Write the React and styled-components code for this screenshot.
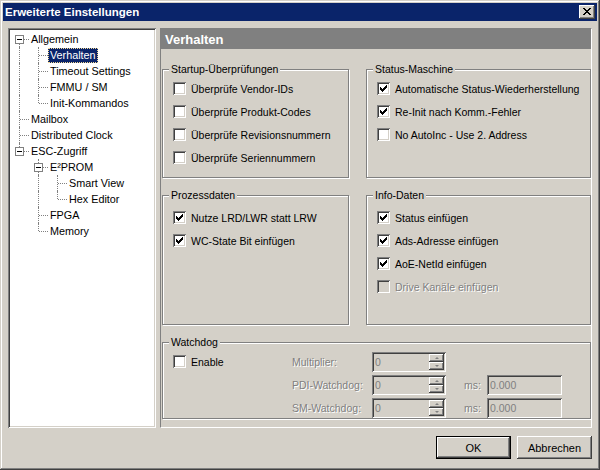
import React from "react";
import styled, { createGlobalStyle } from "styled-components";

// ----- Global -----
const GlobalStyle = createGlobalStyle`
  html, body {
    margin: 0;
    padding: 0;
    background: #d4d0c8;
  }
  body {
    font-family: "Liberation Sans", Arial, sans-serif;
    font-size: 11px;
    color: #000;
  }
  * { box-sizing: border-box; }
`;

// ----- Window frame -----
const Window = styled.div`
  width: 600px;
  height: 470px;
  padding: 3px;
  display: flex;
  flex-direction: column;
  background: #d4d0c8;
  box-shadow: inset -1px -1px 0 #404040, inset 1px 1px 0 #d4d0c8,
    inset -2px -2px 0 #808080, inset 2px 2px 0 #fff;
`;

const TitleBar = styled.div`
  height: 18px;
  flex: none;
  display: flex;
  align-items: center;
  justify-content: space-between;
  padding: 0 2px 0 2px;
  background: #0a246a;
  color: #fff;
  font-weight: bold;
  font-size: 11.5px;
`;

const raised = `
  background: #d4d0c8;
  border: none;
  box-shadow: inset -1px -1px 0 #404040, inset 1px 1px 0 #fff,
    inset -2px -2px 0 #808080, inset 2px 2px 0 #d4d0c8;
`;

const sunken = `
  box-shadow: inset 1px 1px 0 #808080, inset -1px -1px 0 #fff,
    inset 2px 2px 0 #404040, inset -2px -2px 0 #d4d0c8;
`;

const CloseButton = styled.div`
  ${raised}
  width: 16px;
  height: 14px;
  display: flex;
  align-items: center;
  justify-content: center;
  padding: 0 1px 1px 0;
`;

// ----- Body -----
const Body = styled.div`
  display: flex;
  gap: 4px;
  height: 400px;
  flex: none;
  margin: 7px 5px 0 5px;
`;

const Tree = styled.div`
  width: 148px;
  flex: none;
  background: #fff;
  padding: 3px 2px;
  ${sunken}
`;

const TreeRow = styled.div`
  display: flex;
  align-items: center;
  height: 16px;
  white-space: nowrap;
`;

const Guide = styled.span`
  position: relative;
  flex: none;
  width: 19px;
  height: 16px;
  &::before {
    content: "";
    display: ${(p) => (p.$line ? "block" : "none")};
    position: absolute;
    left: 9px;
    top: 0;
    bottom: 0;
    border-left: 1px dotted #808080;
  }
`;

const Joint = styled.span`
  position: relative;
  flex: none;
  width: 19px;
  height: 16px;
  &::before {
    content: "";
    position: absolute;
    left: 9px;
    top: ${(p) => (p.$first ? "8px" : "0")};
    bottom: ${(p) => (p.$last ? "8px" : "0")};
    border-left: 1px dotted #808080;
  }
  &::after {
    content: "";
    position: absolute;
    left: 10px;
    top: 8px;
    width: 9px;
    border-top: 1px dotted #808080;
  }
`;

const Expander = styled.span`
  position: absolute;
  z-index: 1;
  left: 5px;
  top: 4px;
  width: 9px;
  height: 9px;
  border: 1px solid #808080;
  background: #fff;
  &::after {
    content: "";
    position: absolute;
    left: 1px;
    top: 3px;
    width: 5px;
    height: 1px;
    background: #000;
  }
`;

const TreeLabel = styled.span`
  height: 15px;
  line-height: 13px;
  padding: 0 1px;
  font-size: 10.8px;
  border: 1px ${(p) => (p.$selected ? "dotted #f5db95" : "solid transparent")};
  background: ${(p) => (p.$selected ? "#0a246a" : "transparent")};
  color: ${(p) => (p.$selected ? "#fff" : "#000")};
`;

// ----- Right panel -----
const Panel = styled.div`
  flex: 1;
  display: flex;
  flex-direction: column;
  border: 1px solid;
  border-color: #808080 #fff #fff #808080;
`;

const PanelHeader = styled.div`
  height: 20px;
  flex: none;
  display: flex;
  align-items: center;
  padding-left: 4px;
  background: #808080;
  color: #fff;
  font-weight: bold;
  font-size: 13px;
`;

const Groups = styled.div`
  display: grid;
  grid-template-columns: 187px 1fr;
  grid-template-rows: 109px 130px 77px;
  column-gap: 17px;
  row-gap: 17px;
  padding: 20px 0 0 1px;
  font-size: 10.5px;
`;

const Group = styled.div`
  position: relative;
  grid-column: ${(p) => (p.$wide ? "1 / -1" : "auto")};
  border: 1px solid #808080;
  box-shadow: inset 1px 1px 0 #fff, 1px 1px 0 #fff;
  padding: ${(p) => p.$pad}px 0 0 10px;
`;

const Caption = styled.span`
  position: absolute;
  top: -7px;
  left: 6px;
  padding: 0 2px;
  line-height: 13px;
  background: #d4d0c8;
`;

const CheckRow = styled.div`
  display: flex;
  align-items: center;
  gap: 5px;
  height: 23px;
  white-space: nowrap;
  color: ${(p) => (p.$disabled ? "#808080" : "#000")};
  text-shadow: ${(p) => (p.$disabled ? "1px 1px 0 #fff" : "none")};
`;

const Box = styled.span`
  width: 13px;
  height: 13px;
  flex: none;
  display: flex;
  align-items: center;
  justify-content: center;
  background: ${(p) => (p.$disabled ? "#d4d0c8" : "#fff")};
  ${sunken}
`;

// ----- Watchdog -----
const WatchGrid = styled.div`
  display: grid;
  grid-template-columns: 119px 80px 74px 41px 75px;
  grid-auto-rows: 23px;
  align-items: center;
`;

const Cell = styled.div`
  grid-column: ${(p) => p.$col};
  grid-row: ${(p) => p.$row};
  padding-left: ${(p) => p.$indent || 0}px;
`;

const DimText = styled.span`
  color: #808080;
  text-shadow: 1px 1px 0 #fff;
  white-space: nowrap;
`;

const Edit = styled.div`
  height: 20px;
  display: flex;
  align-items: center;
  padding: 2px 2px 2px 3px;
  background: #d4d0c8;
  color: #808080;
  ${sunken}
`;

const EditText = styled.span`
  flex: 1;
`;

const SpinStack = styled.div`
  width: 15px;
  height: 16px;
  display: flex;
  flex-direction: column;
`;

const SpinButton = styled.div`
  ${raised}
  flex: 1;
  display: flex;
  align-items: center;
  justify-content: center;
`;

const Arrow = styled.span`
  width: 0;
  height: 0;
  border-left: 2px solid transparent;
  border-right: 2px solid transparent;
  ${(p) => (p.$up ? "border-bottom" : "border-top")}: 2px solid #808080;
`;

// ----- Footer -----
const Footer = styled.div`
  display: flex;
  justify-content: flex-end;
  gap: 6px;
  padding: 8px 5px 0 0;
`;

const Button = styled.button`
  width: 75px;
  height: 23px;
  padding: 0;
  font-family: inherit;
  font-size: 11px;
  color: #000;
  background: #d4d0c8;
  border: none;
  box-shadow: ${(p) =>
    p.$default
      ? "inset 0 0 0 1px #000, inset -2px -2px 0 #404040, inset 2px 2px 0 #fff, inset -3px -3px 0 #808080"
      : "inset -1px -1px 0 #404040, inset 1px 1px 0 #fff, inset -2px -2px 0 #808080, inset 2px 2px 0 #d4d0c8"};
`;

// ----- Data -----
const tree = [
  {
    label: "Allgemein",
    children: [
      { label: "Verhalten", selected: true },
      { label: "Timeout Settings" },
      { label: "FMMU / SM" },
      { label: "Init-Kommandos" },
    ],
  },
  { label: "Mailbox" },
  { label: "Distributed Clock" },
  {
    label: "ESC-Zugriff",
    children: [
      { label: "E²PROM", children: [{ label: "Smart View" }, { label: "Hex Editor" }] },
      { label: "FPGA" },
      { label: "Memory" },
    ],
  },
];

function flatten(nodes, guides = [], out = []) {
  nodes.forEach((n, i) => {
    const last = i === nodes.length - 1;
    out.push({ ...n, guides, last, first: guides.length === 0 && i === 0 });
    if (n.children) flatten(n.children, [...guides, !last], out);
  });
  return out;
}

const startup = [
  "Überprüfe Vendor-IDs",
  "Überprüfe Produkt-Codes",
  "Überprüfe Revisionsnummern",
  "Überprüfe Seriennummern",
];

const statusMaschine = [
  { label: "Automatische Status-Wiederherstellung", checked: true },
  { label: "Re-Init nach Komm.-Fehler", checked: true },
  { label: "No AutoInc - Use 2. Address" },
];

const prozess = [
  { label: "Nutze LRD/LWR statt LRW", checked: true },
  { label: "WC-State Bit einfügen", checked: true },
];

const info = [
  { label: "Status einfügen", checked: true },
  { label: "Ads-Adresse einfügen", checked: true },
  { label: "AoE-NetId einfügen", checked: true },
  { label: "Drive Kanäle einfügen", disabled: true },
];

// ----- Small parts -----
function CheckBox({ label, checked, disabled }) {
  return (
    <CheckRow $disabled={disabled}>
      <Box $disabled={disabled}>
        {checked && (
          <svg width="7" height="7" viewBox="0 0 7 7" shapeRendering="crispEdges">
            <path d="M6 0h1v3H6zM5 1h1v3H5zM4 2h1v3H4zM3 3h1v3H3zM2 4h1v3H2zM1 3h1v3H1zM0 2h1v3H0z" fill="#000" />
          </svg>
        )}
      </Box>
      {label}
    </CheckRow>
  );
}

function SpinBox({ value }) {
  return (
    <Edit>
      <EditText>{value}</EditText>
      <SpinStack>
        <SpinButton><Arrow $up /></SpinButton>
        <SpinButton><Arrow /></SpinButton>
      </SpinStack>
    </Edit>
  );
}

export default function App() {
  const rows = flatten(tree);
  return (
    <>
      <GlobalStyle />
      <Window>
        <TitleBar>
          Erweiterte Einstellungen
          <CloseButton>
            <svg width="8" height="7" viewBox="0 0 8 7" shapeRendering="crispEdges">
              <path
                d="M0 0h2v1H0zM6 0h2v1H6zM1 1h2v1H1zM5 1h2v1H5zM2 2h4v1H2zM3 3h2v1H3zM2 4h4v1H2zM1 5h2v1H1zM5 5h2v1H5zM0 6h2v1H0zM6 6h2v1H6z"
                fill="#000"
              />
            </svg>
          </CloseButton>
        </TitleBar>

        <Body>
          <Tree>
            {rows.map((r) => (
              <TreeRow key={r.label}>
                {r.guides.map((g, i) => (
                  <Guide key={i} $line={g} />
                ))}
                <Joint $first={r.first} $last={r.last}>
                  {r.children && <Expander />}
                </Joint>
                <TreeLabel $selected={r.selected}>{r.label}</TreeLabel>
              </TreeRow>
            ))}
          </Tree>

          <Panel>
            <PanelHeader>Verhalten</PanelHeader>
            <Groups>
              <Group $pad={7}>
                <Caption>Startup-Überprüfungen</Caption>
                {startup.map((s) => (
                  <CheckBox key={s} label={s} />
                ))}
              </Group>
              <Group $pad={7}>
                <Caption>Status-Maschine</Caption>
                {statusMaschine.map((s) => (
                  <CheckBox key={s.label} {...s} />
                ))}
              </Group>
              <Group $pad={10}>
                <Caption>Prozessdaten</Caption>
                {prozess.map((s) => (
                  <CheckBox key={s.label} {...s} />
                ))}
              </Group>
              <Group $pad={10}>
                <Caption>Info-Daten</Caption>
                {info.map((s) => (
                  <CheckBox key={s.label} {...s} />
                ))}
              </Group>
              <Group $wide $pad={7}>
                <Caption>Watchdog</Caption>
                <WatchGrid>
                  <Cell $col={1} $row={1}>
                    <CheckBox label="Enable" />
                  </Cell>
                  <Cell $col={2} $row={1}><DimText>Multiplier:</DimText></Cell>
                  <Cell $col={3} $row={1}><SpinBox value="0" /></Cell>
                  <Cell $col={2} $row={2}><DimText>PDI-Watchdog:</DimText></Cell>
                  <Cell $col={3} $row={2}><SpinBox value="0" /></Cell>
                  <Cell $col={4} $row={2} $indent={18}><DimText>ms:</DimText></Cell>
                  <Cell $col={5} $row={2}><Edit>0.000</Edit></Cell>
                  <Cell $col={2} $row={3}><DimText>SM-Watchdog:</DimText></Cell>
                  <Cell $col={3} $row={3}><SpinBox value="0" /></Cell>
                  <Cell $col={4} $row={3} $indent={18}><DimText>ms:</DimText></Cell>
                  <Cell $col={5} $row={3}><Edit>0.000</Edit></Cell>
                </WatchGrid>
              </Group>
            </Groups>
          </Panel>
        </Body>

        <Footer>
          <Button $default>OK</Button>
          <Button>Abbrechen</Button>
        </Footer>
      </Window>
    </>
  );
}
